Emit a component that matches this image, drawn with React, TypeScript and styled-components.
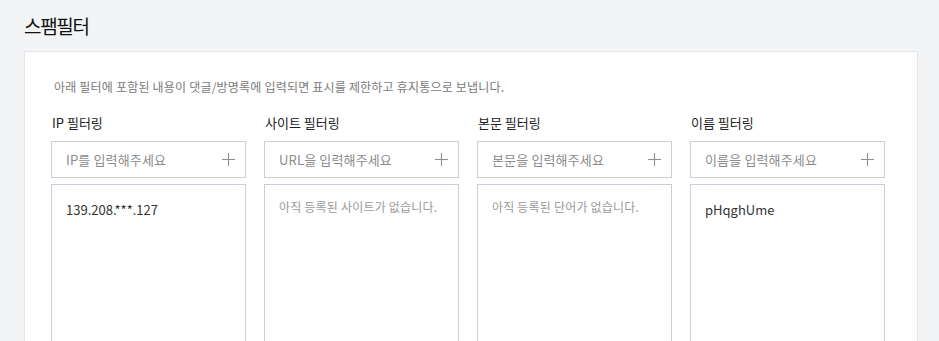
import React from "react";
import styled, { createGlobalStyle } from "styled-components";

const Global = createGlobalStyle`
  html, body { margin: 0; padding: 0; background: #f3f4f6; }
  body { font-family: "Noto Sans CJK KR", "Noto Sans", sans-serif; color: #222; }
  * { box-sizing: border-box; }
`;

const Page = styled.div`
  padding: 12px 0 0 24px;
`;

const Title = styled.h1`
  margin: 0;
  font-size: 19px;
  font-weight: 400;
  line-height: 28px;
  color: #111;
  letter-spacing: -1.3px;
`;

const Card = styled.section`
  margin-top: 11px;
  width: 894px;
  background: #fff;
  border: 1px solid #e3e5ea;
  padding: 26px 26px 0 26px;
  height: 320px;
`;

const Desc = styled.p`
  margin: 0 0 0 3px;
  font-size: 12px;
  line-height: 18px;
  color: #7a7a7a;
  letter-spacing: 0.2px;
`;

const Columns = styled.div`
  display: grid;
  grid-template-columns: repeat(4, 195px);
  column-gap: 18px;
  margin-top: 17px;
`;

const Column = styled.div`
  display: flex;
  flex-direction: column;
`;

const Label = styled.div`
  font-size: 13px;
  line-height: 20px;
  color: #222;
  margin: 0 0 8px 1px;
`;

const InputBox = styled.div`
  height: 37px;
  border: 1px solid #c8cfd8;
  display: flex;
  align-items: center;
  justify-content: space-between;
  padding: 0 10px 0 14px;
`;

const Placeholder = styled.span`
  font-size: 13px;
  color: #8c8c8c;
  letter-spacing: 0.15px;
`;

const PlusIcon = () => (
  <svg width="13" height="13" viewBox="0 0 13 13" fill="none">
    <path d="M6.5 0v13M0 6.5h13" stroke="#8e8e8e" strokeWidth="1.1" />
  </svg>
);

const List = styled.div`
  margin-top: 6px;
  height: 200px;
  border: 1px solid #c8cfd8;
  padding: 15px 14px;
`;

const Item = styled.div`
  font-size: 13px;
  line-height: 20px;
  color: #333;
`;

const Empty = styled.div`
  font-size: 12px;
  line-height: 14px;
  color: #9a9a9a;
  letter-spacing: 0.2px;
`;

const filters = [
  { label: "IP 필터링", placeholder: "IP를 입력해주세요", items: ["139.208.***.127"], empty: "" },
  { label: "사이트 필터링", placeholder: "URL을 입력해주세요", items: [], empty: "아직 등록된 사이트가 없습니다." },
  { label: "본문 필터링", placeholder: "본문을 입력해주세요", items: [], empty: "아직 등록된 단어가 없습니다." },
  { label: "이름 필터링", placeholder: "이름을 입력해주세요", items: ["pHqghUme"], empty: "" },
];

export default function App() {
  return (
    <>
      <Global />
      <Page>
        <Title>스팸필터</Title>
        <Card>
          <Desc>아래 필터에 포함된 내용이 댓글/방명록에 입력되면 표시를 제한하고 휴지통으로 보냅니다.</Desc>
          <Columns>
            {filters.map((f) => (
              <Column key={f.label}>
                <Label>{f.label}</Label>
                <InputBox>
                  <Placeholder>{f.placeholder}</Placeholder>
                  <PlusIcon />
                </InputBox>
                <List>
                  {f.items.length > 0 ? (
                    f.items.map((it) => <Item key={it}>{it}</Item>)
                  ) : (
                    <Empty>{f.empty}</Empty>
                  )}
                </List>
              </Column>
            ))}
          </Columns>
        </Card>
      </Page>
    </>
  );
}
